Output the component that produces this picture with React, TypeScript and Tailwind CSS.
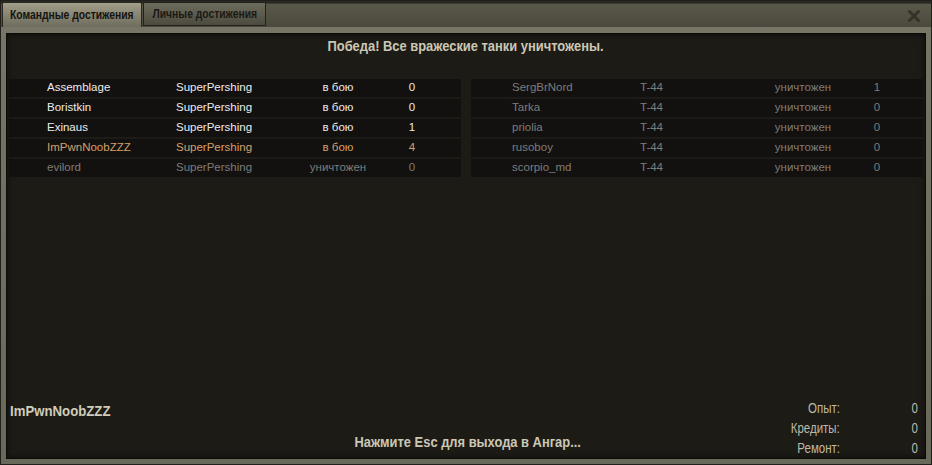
import React from "react";

const sans = { fontFamily: '"Liberation Sans", Arial, sans-serif' };

type Row = { name: string; tank: string; status: string; score: string; tone: "alive" | "me" | "dead" };

const left: Row[] = [
  { name: "Assemblage", tank: "SuperPershing", status: "в бою", score: "0", tone: "alive" },
  { name: "Boristkin", tank: "SuperPershing", status: "в бою", score: "0", tone: "alive" },
  { name: "Exinaus", tank: "SuperPershing", status: "в бою", score: "1", tone: "alive" },
  { name: "ImPwnNoobZZZ", tank: "SuperPershing", status: "в бою", score: "4", tone: "me" },
  { name: "evilord", tank: "SuperPershing", status: "уничтожен", score: "0", tone: "dead" },
];

const right: Row[] = [
  { name: "SergBrNord", tank: "T-44", status: "уничтожен", score: "1", tone: "dead" },
  { name: "Tarka", tank: "T-44", status: "уничтожен", score: "0", tone: "dead" },
  { name: "priolia", tank: "T-44", status: "уничтожен", score: "0", tone: "dead" },
  { name: "rusoboy", tank: "T-44", status: "уничтожен", score: "0", tone: "dead" },
  { name: "scorpio_md", tank: "T-44", status: "уничтожен", score: "0", tone: "dead" },
];

const toneClass = {
  alive: "text-[#ececec]",
  me: "text-[#d5a06a]",
  dead: "text-[#7e7c78]",
};

function Table({ rows, side }: { rows: Row[]; side: "l" | "r" }) {
  const cols =
    side === "l"
      ? "grid-cols-[129px_122px_80px_68px] pl-[38px]"
      : "grid-cols-[128px_123px_80px_68px] pl-[41px]";
  return (
    <div className="flex flex-col gap-[2px] flex-1">
      {rows.map((r) => (
        <div
          key={r.name}
          className={`grid ${cols} h-[18px] items-center bg-[#121110] text-[11.5px] ${toneClass[r.tone]}`}
          style={sans}
        >
          <span>{r.name}</span>
          <span>{r.tank}</span>
          <span className="text-center">{r.status}</span>
          <span className="text-center">{r.score}</span>
        </div>
      ))}
    </div>
  );
}

function Stat({ label }: { label: string }) {
  return (
    <>
      <span className="text-right">
        <span className="inline-block scale-x-[0.82] origin-right">{label}</span>
      </span>
      <span className="text-right">
        <span className="inline-block scale-x-[0.82] origin-right">0</span>
      </span>
    </>
  );
}

export default function App() {
  return (
    <div className="w-[932px] h-[465px] bg-[#22201a] p-[1px] overflow-hidden" style={sans}>
      <div className="w-full h-full flex flex-col bg-[#6c6a5b]">
        {/* top bar */}
        <div className="h-[26px] flex items-end bg-gradient-to-b from-[#2a2822] from-[8%] via-[#5a5849] via-[12%] to-[#4b493d]">
          <div className="w-[140px] h-[25px] ml-[1px] flex items-center justify-center bg-gradient-to-b from-[#a19e89] to-[#6e6c5d] border-x border-t border-[#2b2921] rounded-t-[2px] text-[12px] font-bold text-[#141310] whitespace-nowrap">
            <span className="inline-block scale-x-[0.86]">Командные достижения</span>
          </div>
          <div className="w-[123px] h-[24px] ml-[1px] mb-[1px] flex items-center justify-center bg-gradient-to-b from-[#6e6c5c] to-[#4d4b3f] border border-[#23211b] text-[12px] font-bold text-[#1a1915] whitespace-nowrap">
            <span className="inline-block scale-x-[0.86]">Личные достижения</span>
          </div>
          <div className="flex-1" />
          <svg width="14" height="14" viewBox="0 0 14 14" className="mr-[10px] mb-[4px]">
            <path d="M2.5 2.5 L11.5 11.5 M11.5 2.5 L2.5 11.5" stroke="#34332a" strokeWidth="3" strokeLinecap="round" />
          </svg>
        </div>
        {/* frame */}
        <div className="flex-1 px-[5px] pt-[6px] pb-[5px] bg-gradient-to-b from-[#777565] to-[#6a6859] flex">
          <div className="flex-1 flex flex-col border border-[#0c0b09] bg-[#1d1b16] shadow-[inset_0_0_6px_rgba(0,0,0,0.6)]">
            <div className="h-[24px] flex items-center justify-center text-[15px] font-bold text-[#cbc7b5] whitespace-nowrap">
              <span className="inline-block scale-x-[0.86]">Победа! Все вражеские танки уничтожены.</span>
            </div>
            <div className="mt-[21px] flex gap-[10px] pl-[2px] pr-[2px]">
              <Table rows={left} side="l" />
              <Table rows={right} side="r" />
            </div>
            <div className="flex-1" />
            <div className="flex items-stretch h-[60px]">
              <div className="flex-1 pl-[3px] pt-[2px] text-[15px] font-bold text-[#d0ccba] whitespace-nowrap">
                <span className="inline-block scale-x-[0.88] origin-left">ImPwnNoobZZZ</span>
              </div>
              <div className="flex items-end pb-[5px] text-[15px] font-bold text-[#cbc7b5] whitespace-nowrap">
                <span className="inline-block scale-x-[0.86]">Нажмите Esc для выхода в Ангар...</span>
              </div>
              <div className="flex-1 flex justify-end">
                <div className="grid grid-cols-[auto_78px] auto-rows-[20px] items-center text-[14px] text-[#bdb9a8] pr-[7px]">
                  <Stat label="Опыт:" />
                  <Stat label="Кредиты:" />
                  <Stat label="Ремонт:" />
                </div>
              </div>
            </div>
          </div>
        </div>
      </div>
    </div>
  );
}
